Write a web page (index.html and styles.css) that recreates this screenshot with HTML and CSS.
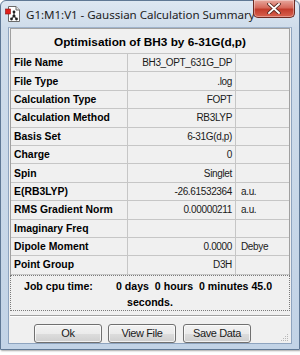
FILE: index.html
```html
<!DOCTYPE html>
<html>
<head>
<meta charset="utf-8">
<link rel="stylesheet" href="styles.css">
</head>
<body>
<div class="window">
  <div class="titlebar">
    <svg class="appicon" width="16" height="16" viewBox="0 0 16 16">
      <path d="M3.5 0.5 H11 L14.5 4 V15.5 H3.5 Z" fill="#fff" stroke="#6b6b6b"/>
      <path d="M11 0.5 V4 H14.5" fill="#e8e8e8" stroke="#6b6b6b"/>
      <line x1="9" y1="6" x2="9" y2="10" stroke="#333" stroke-width="1"/>
      <line x1="9" y1="10" x2="6.5" y2="13" stroke="#333" stroke-width="1"/>
      <line x1="9" y1="10" x2="11.5" y2="13" stroke="#333" stroke-width="1"/>
      <circle cx="9" cy="6" r="1.4" fill="#222"/>
      <circle cx="9" cy="10" r="1.6" fill="#222"/>
      <circle cx="6.5" cy="13" r="1.4" fill="#222"/>
      <circle cx="11.5" cy="13" r="1.4" fill="#222"/>
      <rect x="0.5" y="3" width="5" height="5" fill="#e0201b" stroke="#8a1010" stroke-width="0.6"/>
    </svg>
    <span class="title">G1:M1:V1 - Gaussian Calculation Summary</span>
    <div class="close">
      <svg width="14" height="11" viewBox="0 0 14 11">
        <path d="M2 1 L12 10 M12 1 L2 10" stroke="#5a2a22" stroke-width="3.6" stroke-linecap="square"/>
        <path d="M2 1 L12 10 M12 1 L2 10" stroke="#ffffff" stroke-width="1.8" stroke-linecap="square"/>
      </svg>
    </div>
  </div>
  <div class="client">
    <div class="grid">
      <div class="header">Optimisation of BH3 by 6-31G(d,p)</div>
      <div class="row"><div class="lbl">File Name</div><div class="val">BH3_OPT_631G_DP</div><div class="unit"></div></div>
      <div class="row"><div class="lbl">File Type</div><div class="val">.log</div><div class="unit"></div></div>
      <div class="row"><div class="lbl">Calculation Type</div><div class="val">FOPT</div><div class="unit"></div></div>
      <div class="row"><div class="lbl">Calculation Method</div><div class="val">RB3LYP</div><div class="unit"></div></div>
      <div class="row"><div class="lbl">Basis Set</div><div class="val">6-31G(d,p)</div><div class="unit"></div></div>
      <div class="row"><div class="lbl">Charge</div><div class="val">0</div><div class="unit"></div></div>
      <div class="row"><div class="lbl">Spin</div><div class="val">Singlet</div><div class="unit"></div></div>
      <div class="row"><div class="lbl">E(RB3LYP)</div><div class="val">-26.61532364</div><div class="unit">a.u.</div></div>
      <div class="row"><div class="lbl">RMS Gradient Norm</div><div class="val">0.00000211</div><div class="unit">a.u.</div></div>
      <div class="row"><div class="lbl">Imaginary Freq</div><div class="val"></div><div class="unit"></div></div>
      <div class="row"><div class="lbl">Dipole Moment</div><div class="val">0.0000</div><div class="unit">Debye</div></div>
      <div class="row"><div class="lbl">Point Group</div><div class="val">D3H</div><div class="unit"></div></div>
    </div>
    <div class="jobbox">
      <div class="joblabel">Job cpu time:</div>
      <div class="jobtime"><div class="line1">0 days  0 hours  0 minutes 45.0</div><div class="line2">seconds.</div></div>
    </div>
    <div class="sep"></div>
    <div class="buttons">
      <div class="btn">Ok</div>
      <div class="btn">View File</div>
      <div class="btn">Save Data</div>
    </div>
    <svg class="grip" width="8" height="8" viewBox="0 0 8 8">
      <g fill="#b8b8b8">
        <rect x="6" y="0" width="1" height="1"/>
        <rect x="4" y="2" width="1" height="1"/><rect x="6" y="2" width="1" height="1"/>
        <rect x="2" y="4" width="1" height="1"/><rect x="4" y="4" width="1" height="1"/><rect x="6" y="4" width="1" height="1"/>
        <rect x="0" y="6" width="1" height="1"/><rect x="2" y="6" width="1" height="1"/><rect x="4" y="6" width="1" height="1"/><rect x="6" y="6" width="1" height="1"/>
      </g>
    </svg>
  </div>
</div>
</body>
</html>
```

FILE: styles.css
```css
html, body {
  margin: 0;
  padding: 0;
  background: #ffffff;
}
body {
  width: 300px;
  height: 355px;
  overflow: hidden;
  font-family: "Liberation Sans", Arial, sans-serif;
  color: #000;
}
.window {
  width: 300px;
  height: 350px;
  box-sizing: border-box;
  border: 1px solid #5f7895;
  border-radius: 6px 6px 0 0;
  background: linear-gradient(to bottom, #dde7f2 0px, #cfdcea 27px, #c2d3e6 100%);
  display: flex;
  flex-direction: column;
  box-shadow: 1px 1px 2px rgba(0,0,0,0.35);
}
.titlebar {
  height: 26px;
  flex: none;
  display: flex;
  align-items: center;
  position: relative;
  padding-left: 4px;
}
.appicon {
  display: block;
}
.title {
  margin-left: 5px;
  font-family: "Noto Sans", "Open Sans", sans-serif;
  font-size: 11.6px;
  color: #1e1e1e;
  letter-spacing: -0.05px;
}
.close {
  position: absolute;
  top: -1px;
  right: 4px;
  width: 42px;
  height: 18px;
  box-sizing: border-box;
  border: 1px solid #6e2a22;
  border-top: none;
  border-radius: 0 0 5px 5px;
  background: linear-gradient(to bottom, #e7a89e 0%, #d6695b 45%, #c23c2c 55%, #d8624f 100%);
  display: flex;
  align-items: center;
  justify-content: center;
  box-shadow: inset 0 0 0 1px rgba(255,255,255,0.35);
}
.client {
  position: relative;
  margin: 0 7px 5px 7px;
  flex: 1;
  min-height: 0;
  background: #f0f0f0;
  border: 1px solid #8ea4bf;
  border-top-color: #9fb3cb;
}
.grid {
  margin: 0 1px;
  border: 1px solid #a0a0a0;
  border-bottom: none;
  background: #f0f0f0;
}
.header {
  height: 25px;
  border-bottom: 1px solid #c6c6c6;
  display: flex;
  align-items: center;
  justify-content: center;
  font-weight: bold;
  font-size: 11.8px;
  padding-top: 1px;
  box-sizing: border-box;
}
.row {
  display: grid;
  grid-template-columns: 117px 108px 1fr;
  height: 18.4px;
  box-sizing: border-box;
  border-bottom: 1px solid #c6c6c6;
}
.row > div {
  display: flex;
  align-items: center;
  overflow: hidden;
  white-space: nowrap;
}
.lbl {
  font-weight: bold;
  font-size: 10.4px;
  padding-left: 3px;
  border-right: 1px solid #c6c6c6;
}
.val {
  justify-content: flex-end;
  font-size: 10px;
  letter-spacing: -0.35px;
  padding-right: 3px;
  border-right: 1px solid #c6c6c6;
  color: #1a1a1a;
}
.unit {
  font-size: 10px;
  letter-spacing: -0.35px;
  padding-left: 5px;
  color: #1a1a1a;
}
.jobbox {
  margin: 0 1px;
  height: 36px;
  box-sizing: border-box;
  border: 1px dotted #7a7a7a;
  padding: 2px 0 0 13px;
  display: flex;
  font-weight: bold;
  font-size: 10.6px;
  line-height: 16px;
}
.joblabel {
  width: 92px;
  flex: none;
}
.line1, .line2 {
  white-space: pre;
}
.line2 {
  padding-left: 11px;
}
.sep {
  margin: 4px 1px 0 1px;
  height: 1px;
  border-top: 1px solid #a0a0a0;
  background: #ffffff;
}
.buttons {
  display: flex;
  gap: 6px;
  margin: 7px 0 0 25px;
}
.btn {
  width: 68px;
  height: 19px;
  box-sizing: border-box;
  border: 1px solid #707070;
  border-radius: 3px;
  background: linear-gradient(to bottom, #f2f2f2 0%, #ebebeb 50%, #dddddd 51%, #cfcfcf 100%);
  box-shadow: inset 0 0 0 1px rgba(255,255,255,0.7);
  display: flex;
  align-items: center;
  justify-content: center;
  font-size: 11px;
  letter-spacing: -0.4px;
  color: #1a1a1a;
}
.btn + .btn + .btn {
  margin-left: 1px;
}
.grip {
  position: absolute;
  right: 2px;
  bottom: 1px;
}
```
